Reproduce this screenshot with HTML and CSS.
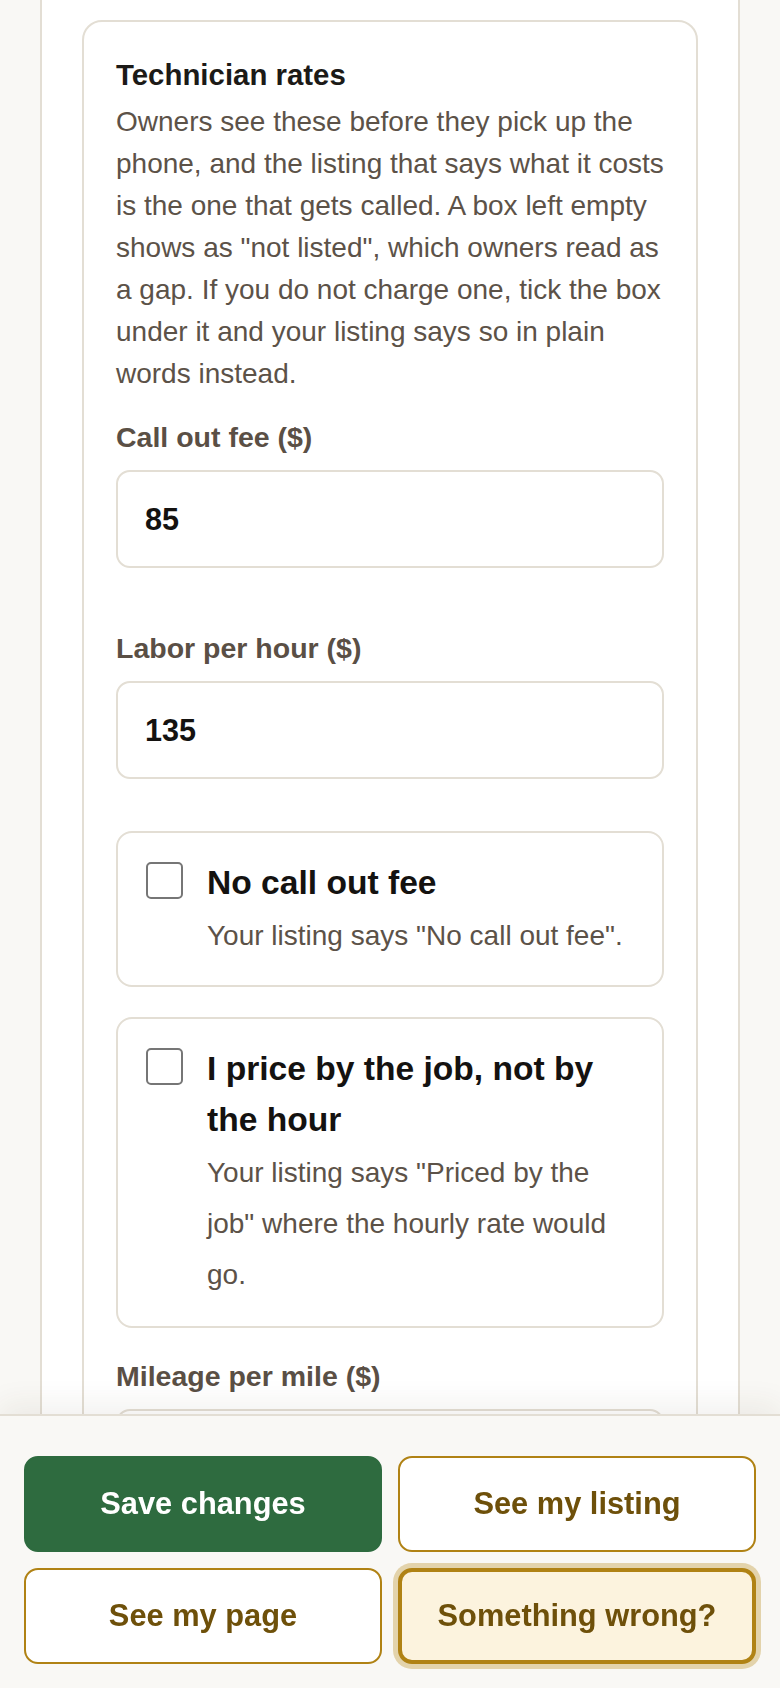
FILE: index.html
```html
<!DOCTYPE html>
<html lang="en">
<head>
<meta charset="utf-8">
<meta name="viewport" content="width=device-width, initial-scale=1">
<title>Technician rates</title>
<link rel="stylesheet" href="styles.css">
</head>
<body>
<div class="page">
  <div class="panel">
    <section class="card">
      <h2 class="card-title">Technician rates</h2>
      <p class="card-desc">Owners see these before they pick up the phone, and the listing that says what it costs is the one that gets called. A box left empty shows as "not listed", which owners read as a gap. If you do not charge one, tick the box under it and your listing says so in plain words instead.</p>

      <div class="field field-first">
        <label class="field-label" for="callout">Call out fee ($)</label>
        <input class="field-input" id="callout" type="text" value="85">
      </div>

      <div class="field field-second">
        <label class="field-label" for="labor">Labor per hour ($)</label>
        <input class="field-input" id="labor" type="text" value="135">
      </div>

      <label class="check-card check-first">
        <input class="check-box" type="checkbox">
        <span class="check-text">
          <span class="check-title">No call out fee</span>
          <span class="check-sub">Your listing says "No call out fee".</span>
        </span>
      </label>

      <label class="check-card check-second">
        <input class="check-box" type="checkbox">
        <span class="check-text">
          <span class="check-title">I price by the job, not by the hour</span>
          <span class="check-sub">Your listing says "Priced by the job" where the hourly rate would go.</span>
        </span>
      </label>

      <div class="field field-third">
        <label class="field-label" for="mileage">Mileage per mile ($)</label>
        <input class="field-input" id="mileage" type="text" value="">
      </div>
    </section>
  </div>
</div>

<div class="action-bar">
  <button class="btn btn-primary" type="button">Save changes</button>
  <button class="btn btn-outline" type="button">See my listing</button>
  <button class="btn btn-outline" type="button">See my page</button>
  <button class="btn btn-alert" type="button">Something wrong?</button>
</div>
</body>
</html>
```

FILE: styles.css
```css
* {
  box-sizing: border-box;
}

html, body {
  margin: 0;
  padding: 0;
}

body {
  background: #f9f8f5;
  font-family: "Liberation Sans", Arial, sans-serif;
  color: #5c5248;
}

.page {
  padding: 0 40px;
}

.panel {
  background: #ffffff;
  border-left: 2px solid #e3ded4;
  border-right: 2px solid #e3ded4;
  padding: 20px 40px 400px 40px;
}

.card {
  border: 2px solid #e3ded4;
  border-radius: 20px;
  background: #ffffff;
  padding: 31px 32px 60px 32px;
  display: flex;
  flex-direction: column;
}

.card-title {
  margin: 0;
  font-size: 29.4px;
  line-height: 44px;
  font-weight: 700;
  color: #1c1a17;
}

.card-desc {
  margin: 4px -10px 0 0;
  font-size: 28px;
  line-height: 42px;
  color: #5c5248;
}

.field {
  display: flex;
  flex-direction: column;
}

.field-first {
  margin-top: 21px;
}

.field-second {
  margin-top: 59px;
}

.field-third {
  margin-top: 27px;
}

.field-label {
  font-size: 28.5px;
  line-height: 42px;
  font-weight: 700;
  color: #5a4f45;
  margin-bottom: 12px;
}

.field-input {
  height: 98px;
  border: 2px solid #e3ded4;
  border-radius: 14px;
  background: #ffffff;
  padding: 0 27px;
  font-family: "Liberation Sans", Arial, sans-serif;
  font-size: 30.6px;
  font-weight: 700;
  color: #141210;
  outline: none;
}

.check-card {
  display: flex;
  align-items: flex-start;
  gap: 24px;
  border: 2px solid #e3ded4;
  border-radius: 16px;
  padding: 24px 28px 24px 28px;
  background: #ffffff;
}

.check-first {
  margin-top: 52px;
}

.check-second {
  margin-top: 30px;
  padding-bottom: 26px;
}

.check-box {
  appearance: none;
  -webkit-appearance: none;
  flex: 0 0 37px;
  width: 37px;
  height: 37px;
  margin: 5px 0 0 0;
  border: 2px solid #767676;
  border-radius: 5px;
  background: #ffffff;
}

.check-text {
  display: flex;
  flex-direction: column;
  flex: 1 1 auto;
  min-width: 0;
}

.check-title {
  font-size: 33.6px;
  line-height: 51px;
  font-weight: 700;
  color: #141210;
}

.check-sub {
  margin-top: 2px;
  font-size: 28px;
  line-height: 51px;
  color: #5c5248;
}

.action-bar {
  position: fixed;
  left: 0;
  right: 0;
  bottom: 0;
  height: 274px;
  background: #f9f8f5;
  border-top: 2px solid #e3ded4;
  box-shadow: 0 -10px 28px rgba(70, 55, 30, 0.07);
  padding: 40px 24px 24px 24px;
  display: grid;
  grid-template-columns: 1fr 1fr;
  grid-auto-rows: 96px;
  gap: 16px;
}

.btn {
  font-family: "Liberation Sans", Arial, sans-serif;
  font-size: 30.8px;
  font-weight: 700;
  border-radius: 14px;
  display: flex;
  align-items: center;
  justify-content: center;
  cursor: pointer;
}

.btn-primary {
  background: #2e6b3f;
  border: 2px solid #2e6b3f;
  color: #ffffff;
}

.btn-outline {
  background: #ffffff;
  border: 2px solid #b08214;
  color: #6e500a;
}

.btn-alert {
  background: #fcf3de;
  border: 4px solid #b08214;
  color: #6e500a;
  box-shadow: 0 0 0 5px #e3d3ab;
}
```
